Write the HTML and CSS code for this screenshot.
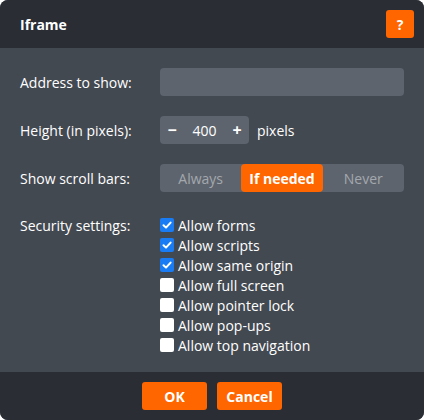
FILE: index.html
```html
<!DOCTYPE html>
<html>
<head>
<meta charset="utf-8">
<link rel="stylesheet" href="styles.css">
</head>
<body>
<div class="dialog">
  <div class="header">
    <div class="title">Iframe</div>
    <button class="help">?</button>
  </div>
  <div class="content">
    <div class="row">
      <div class="label">Address to show:</div>
      <div class="field"><div class="input"></div></div>
    </div>
    <div class="row">
      <div class="label">Height (in pixels):</div>
      <div class="field">
        <div class="spin"><span class="sbtn">−</span><span class="sval">400</span><span class="sbtn">+</span></div>
        <span class="unit">pixels</span>
      </div>
    </div>
    <div class="row">
      <div class="label">Show scroll bars:</div>
      <div class="field">
        <div class="seg"><span class="opt">Always</span><span class="opt sel">If needed</span><span class="opt">Never</span></div>
      </div>
    </div>
    <div class="row top">
      <div class="label lab-sec">Security settings:</div>
      <div class="checks">
        <div class="chk"><span class="box on"><svg viewBox="0 0 14 14"><path d="M3.5 7.2 L6 9.6 L10.6 4.6" fill="none" stroke="#fff" stroke-width="2" stroke-linecap="round" stroke-linejoin="round"/></svg></span>Allow forms</div>
        <div class="chk"><span class="box on"><svg viewBox="0 0 14 14"><path d="M3.5 7.2 L6 9.6 L10.6 4.6" fill="none" stroke="#fff" stroke-width="2" stroke-linecap="round" stroke-linejoin="round"/></svg></span>Allow scripts</div>
        <div class="chk"><span class="box on"><svg viewBox="0 0 14 14"><path d="M3.5 7.2 L6 9.6 L10.6 4.6" fill="none" stroke="#fff" stroke-width="2" stroke-linecap="round" stroke-linejoin="round"/></svg></span>Allow same origin</div>
        <div class="chk"><span class="box"></span>Allow full screen</div>
        <div class="chk"><span class="box"></span>Allow pointer lock</div>
        <div class="chk"><span class="box"></span>Allow pop-ups</div>
        <div class="chk"><span class="box"></span>Allow top navigation</div>
      </div>
    </div>
  </div>
  <div class="footer">
    <button class="btn">OK</button>
    <button class="btn">Cancel</button>
  </div>
</div>
</body>
</html>
```
FILE: styles.css
```css
html, body { margin: 0; padding: 0; background: #ffffff; }
body { font-family: "Open Sans", "Noto Sans", sans-serif; font-size: 14px; color: #ffffff; }
.dialog { width: 424px; height: 420px; display: flex; flex-direction: column; border-radius: 8px; overflow: hidden; background: #434951; }
.header { height: 48px; background: #2a2d34; display: flex; align-items: center; justify-content: space-between; padding: 0 10px 0 20px; box-sizing: border-box; }
.title { font-weight: 700; font-size: 14px; }
.help { width: 28px; height: 28px; border: none; border-radius: 3px; background: #ff6600; color: #fff; font-family: inherit; font-weight: 700; font-size: 14px; padding: 0; }
.content { flex: 1; padding: 20px 20px 0 20px; display: flex; flex-direction: column; gap: 20px; }
.row { display: flex; align-items: center; }
.row.top { align-items: flex-start; }
.label { width: 140px; flex: none; }
.lab-sec { margin-top: 4px; }
.field { flex: 1; display: flex; align-items: center; }
.input { flex: 1; height: 28px; background: #5e646d; border-radius: 4px; }
.spin { display: flex; align-items: center; height: 28px; background: #5e646d; border-radius: 4px; width: 89px; }
.sbtn { width: 24px; text-align: center; font-weight: 700; font-size: 16px; }
.sval { flex: 1; text-align: center; }
.unit { margin-left: 8px; }
.seg { flex: 1; display: flex; height: 28px; background: #5e646d; border-radius: 4px; }
.opt { flex: 1; display: flex; align-items: center; justify-content: center; color: #a3a8ae; border-radius: 4px; }
.opt.sel { background: #ff6600; color: #fff; font-weight: 700; }
.checks { display: flex; flex-direction: column; margin-top: 3px; }
.chk { display: flex; align-items: center; height: 20px; }
.box { width: 14px; height: 14px; background: #fff; border-radius: 2px; margin-right: 4px; flex: none; display: flex; }
.box.on { background: #1a7cf5; }
.box svg { width: 14px; height: 14px; }
.footer { height: 48px; background: #2a2d34; display: flex; align-items: center; justify-content: center; gap: 10px; }
.btn { width: 65px; height: 28px; border: none; border-radius: 3px; background: #ff6600; color: #fff; font-family: inherit; font-weight: 700; font-size: 14px; padding: 0; }
```
